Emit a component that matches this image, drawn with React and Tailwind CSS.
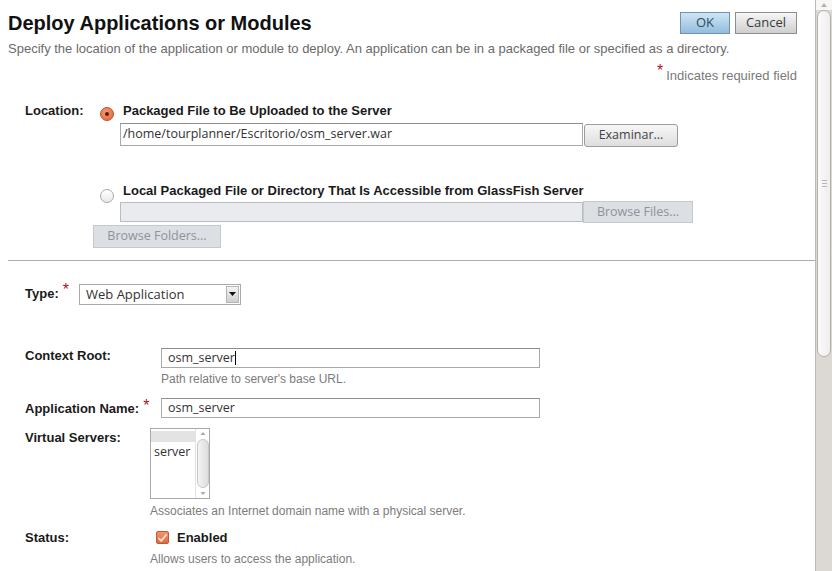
import React from "react";

const label = "font-['Liberation_Sans',Arial,sans-serif] font-bold text-[13px] leading-[16px] text-[#1a1a1a]";
const help = "font-['Liberation_Sans',Arial,sans-serif] text-[12px] leading-[14px] text-[#7c7c7c]";
const ui = "font-['Open_Sans','DejaVu_Sans',sans-serif]";

function Star({ className = "" }) {
  return <span className={"text-[#b3121b] text-[16px] leading-none font-normal " + className}>*</span>;
}

function Radio({ checked, className = "" }) {
  if (checked)
    return (
      <span className={"w-[14px] h-[14px] rounded-full border border-[#b9502c] bg-[radial-gradient(circle_at_40%_35%,#f59a72,#e0623a)] flex items-center justify-center shrink-0 " + className}>
        <span className="block w-[4px] h-[4px] rounded-full bg-[#5a1e0c]" />
      </span>
    );
  return <span className={"block w-[14px] h-[14px] rounded-full border border-[#a9a9a9] bg-gradient-to-b from-[#ffffff] to-[#e9e9e9] shrink-0 " + className} />;
}

function TextInput({ value, w, h = "h-[20px]", pl = "pl-[6px]", caret }) {
  return (
    <div className={`${w} ${h} ${pl} shrink-0 border border-[#a8a8a8] border-t-[#8d8d8d] bg-white flex items-center ${ui} text-[12.5px] text-[#333]`}>
      {value}
      {caret && <span className="w-px h-[14px] bg-black" />}
    </div>
  );
}

export default function App() {
  return (
    <div className="w-[832px] h-[571px] overflow-hidden flex bg-white font-['Liberation_Sans',Arial,sans-serif]">
      <main className="flex-1 min-w-0">
        {/* header */}
        <div className="flex items-center justify-between pl-[8px] pr-[18px] pt-[12px]">
          <h1 className="text-[20px] font-bold leading-[22px] text-[#111]">Deploy Applications or Modules</h1>
          <div className="flex gap-[5px]">
            <button className={`w-[50px] h-[22px] border border-[#6f93b4] bg-gradient-to-b from-[#cfe5f4] to-[#93bddd] text-[13px] text-[#2f4a60] ${ui}`}>OK</button>
            <button className={`w-[62px] h-[22px] border border-[#8e8e8e] bg-gradient-to-b from-[#f6f6f6] to-[#cfcfcf] text-[13px] text-[#3a3a3a] ${ui}`}>Cancel</button>
          </div>
        </div>
        <p className="mt-[8px] pl-[8px] text-[13px] leading-[14px] text-[#6b6b6b]">
          Specify the location of the application or module to deploy. An application can be in a packaged file or specified as a directory.
        </p>
        <div className="mt-[11px] pr-[18px] text-right text-[13px] leading-[14px] text-[#7a7a7a]">
          <Star className="relative -top-[4px] mr-[3px]" />Indicates required field
        </div>

        {/* location */}
        <div className="mt-[20px] flex pl-[25px]">
          <div className={`w-[75px] ${label}`}>Location:</div>
          <div className="flex flex-col">
            <div className="flex items-start h-[16px]">
              <Radio checked className="mt-[4px]" />
              <span className={`ml-[9px] ${label}`}>Packaged File to Be Uploaded to the Server</span>
            </div>
            <div className="mt-[4px] ml-[20px] flex items-start">
              <TextInput value="/home/tourplanner/Escritorio/osm_server.war" w="w-[463px]" h="h-[23px]" pl="pl-[2px]" />
              <button className={`ml-[1px] mt-[1px] w-[94px] h-[23px] rounded-[3px] border border-[#9c9c9c] bg-gradient-to-b from-[#f7f7f7] to-[#dedede] text-[12.5px] text-[#444] ${ui}`}>
                Examinar...
              </button>
            </div>
            <div className="mt-[36px] flex items-start h-[16px]">
              <Radio className="mt-[6px]" />
              <span className={`ml-[9px] ${label}`}>Local Packaged File or Directory That Is Accessible from GlassFish Server</span>
            </div>
            <div className="mt-[2px] ml-[20px] flex items-start">
              <div className="mt-[1px] w-[463px] h-[20px] border border-[#b9bdc2] bg-[#e9ebee]" />
              <button className={`w-[110px] h-[22px] border border-[#c5c9ce] bg-[#dcdfe3] text-[12.5px] text-[#8e949b] ${ui}`}>Browse Files...</button>
            </div>
          </div>
        </div>
        <div className="ml-[93px]">
          <button className={`w-[128px] h-[23px] border border-[#c5c9ce] bg-[#dcdfe3] text-[12.5px] text-[#8e949b] ${ui}`}>Browse Folders...</button>
        </div>

        <div className="mt-[12px] ml-[8px] h-px bg-[#a4adb9]" />

        {/* type */}
        <div className="mt-[23px] pl-[25px] flex items-center">
          <div className="w-[54px] flex items-start">
            <span className={label}>Type:</span>
            <Star className="ml-[4px] -mt-[4px]" />
          </div>
          <div className={`w-[162px] h-[21px] border border-[#a9a9a9] bg-white flex items-center justify-between pl-[6px] pr-[1px] ${ui} text-[13px] text-[#333]`}>
            Web Application
            <span className="w-[13px] h-[17px] border border-[#b5b5b5] bg-gradient-to-b from-[#f4f4f4] to-[#cfcfcf] flex items-center justify-center">
              <svg width="7" height="4" viewBox="0 0 7 4"><path d="M0 0h7L3.5 4z" fill="#111" /></svg>
            </span>
          </div>
        </div>

        {/* context root */}
        <div className="mt-[43px] pl-[25px] flex items-start">
          <div className={`w-[136px] ${label}`}>Context Root:</div>
          <TextInput value="osm_server" w="w-[379px]" caret />
        </div>
        <div className={`mt-[4px] ml-[161px] ${help} text-[12.5px]`}>Path relative to server's base URL.</div>

        <div className="mt-[12px] pl-[25px] flex items-start">
          <div className="w-[136px] flex items-start pt-[3px]">
            <span className={label}>Application Name:</span>
            <Star className="ml-[4px] -mt-[3px]" />
          </div>
          <TextInput value="osm_server" w="w-[379px]" />
        </div>

        {/* virtual servers */}
        <div className="mt-[10px] pl-[25px] flex items-start">
          <div className={`w-[125px] pt-[2px] ${label}`}>Virtual Servers:</div>
          <div className="w-[60px] h-[71px] border border-[#a9a9a9] bg-white flex">
            <div className="flex-1 flex flex-col pt-[2px]">
              <div className="h-[11px] bg-[#e3e3e3]" />
              <div className={`pl-[3px] mt-[2px] ${ui} text-[12.5px] leading-[16px] text-[#333]`}>server</div>
            </div>
            <div className="w-[14px] flex flex-col items-center py-[1px] border-l border-[#e2e2e2]">
              <svg width="6" height="8" viewBox="0 0 6 8"><path d="M3 2 5.5 5H.5z" fill="#aaa" /></svg>
              <div className="w-[12px] flex-1 my-[1px] rounded-[6px] border border-[#c6c6c6] bg-gradient-to-r from-[#f4f4f4] to-[#dddddd]" />
              <svg width="6" height="8" viewBox="0 0 6 8"><path d="M3 6 5.5 3H.5z" fill="#aaa" /></svg>
            </div>
          </div>
        </div>
        <div className={`mt-[5px] ml-[150px] ${help}`}>Associates an Internet domain name with a physical server.</div>

        {/* status */}
        <div className="mt-[12px] pl-[25px] flex items-center h-[16px]">
          <div className={`w-[131px] ${label}`}>Status:</div>
          <span className="w-[13px] h-[13px] rounded-[2px] border border-[#c0572f] bg-gradient-to-b from-[#f4936b] to-[#e16a3e] flex items-center justify-center">
            <svg width="11" height="10" viewBox="0 0 11 10"><path d="M1.5 5 4.2 7.8 9.6 1.4" fill="none" stroke="#fbe3d8" strokeWidth="1.8" /></svg>
          </span>
          <span className={`ml-[8px] ${label}`}>Enabled</span>
        </div>
        <div className={`mt-[6px] ml-[150px] ${help}`}>Allows users to access the application.</div>
      </main>

      {/* window scrollbar */}
      <div className="w-[17px] h-full flex flex-col border-l border-[#bdbab6] bg-[#dcd8d4]">
        <div className="h-[10px] bg-[#f7f6f5] flex items-center justify-center">
          <svg width="6" height="4" viewBox="0 0 6 4"><path d="M3 0 6 4H0z" fill="#b5b2ae" /></svg>
        </div>
        <div className="h-[347px] mx-[1px] rounded-[7px] border border-[#b4b1ad] bg-gradient-to-r from-[#fbfbfb] to-[#eeeeee] flex items-center justify-center">
          <div className="flex flex-col gap-[2px]">
            <span className="w-[5px] h-px bg-[#b8b5b1]" />
            <span className="w-[5px] h-px bg-[#b8b5b1]" />
            <span className="w-[5px] h-px bg-[#b8b5b1]" />
          </div>
        </div>
      </div>
    </div>
  );
}
